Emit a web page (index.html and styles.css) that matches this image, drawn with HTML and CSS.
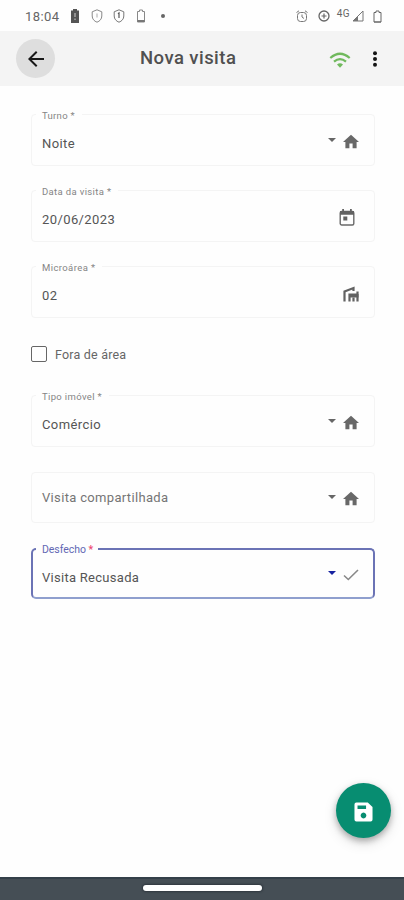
FILE: index.html
```html
<!DOCTYPE html>
<html lang="pt-BR">
<head>
<meta charset="utf-8">
<title>Nova visita</title>
<link rel="stylesheet" href="styles.css">
</head>
<body>
<svg width="0" height="0" class="defs">
  <symbol id="home" viewBox="2 3 20 17"><path d="M10 20v-6h4v6h5v-8h3L12 3 2 12h3v8z"/></symbol>
  <symbol id="caret" viewBox="0 0 8 4"><path d="M0 0h8L4 4z"/></symbol>
</svg>
<div class="screen">
  <div class="status">
    <span class="clock">18:04</span>
    <svg class="st-battery" viewBox="0 0 10 14"><path d="M3 0h4v1.500h2V14H1V1.500h2z" fill="#555"/><path d="M5 4v4M5 9.500v1.500" stroke="#bbb" stroke-width="1.200"/></svg>
    <svg class="st-shield" viewBox="0 0 12 14"><path d="M6 .8l4.800 2v4.200c0 3-2 5.200-4.800 6.200C3.200 12.200 1.200 10 1.200 7V2.800z" fill="none" stroke="#888"/><path d="M6 4.500v4" stroke="#aaa"/></svg>
    <svg class="st-shield second" viewBox="0 0 12 14"><path d="M6 .8l4.800 2v4.200c0 3-2 5.200-4.800 6.200C3.200 12.200 1.200 10 1.200 7V2.800z" fill="none" stroke="#777"/><path d="M5 4.800l1-.8v5" fill="none" stroke="#555" stroke-width="1.200"/></svg>
    <svg class="st-battery" viewBox="0 0 10 14"><path d="M3.500 1h3v1.500h2v10.500h-7V2.500h2z" fill="none" stroke="#888"/><path d="M1.500 12h7" stroke="#777" stroke-width="2"/></svg>
    <i class="dot"></i>
    <div class="st-right">
      <svg width="12" height="13" viewBox="0 0 12 13"><g fill="none" stroke="#777"><rect x="1.500" y="2.500" width="9" height="9" rx="3"/><path d="M.5 2.500L3 .8M11.500 2.500L9 .8M6 4.500V7l2 1.500"/></g></svg>
      <svg width="12" height="12" viewBox="0 0 12 12"><circle cx="6" cy="6" r="5" fill="none" stroke="#666" stroke-width="1.300"/><path d="M3.500 6h5M6 3.500v5" stroke="#666" stroke-width="1.200"/></svg>
      <span class="net">4G</span>
      <svg class="signal" width="12" height="12" viewBox="0 0 12 12"><path d="M11 1v10H1z" fill="none" stroke="#777"/><path d="M6 6v5H1z" fill="#777"/></svg>
      <svg class="batt" width="9" height="13" viewBox="0 0 9 13"><path d="M3 1h3v1.500h2V12H1V2.500h2z" fill="none" stroke="#666"/><path d="M1 12h7" stroke="#666"/></svg>
    </div>
  </div>
  <header class="bar">
    <button class="back" aria-label="Voltar"><svg width="16" height="16" viewBox="4 4 16 16"><path d="M20 11H7.830l5.590-5.590L12 4l-8 8 8 8 1.410-1.410L7.830 13H20z" fill="#181818"/></svg></button>
    <h1>Nova visita</h1>
    <svg class="wifi" width="22" height="16" viewBox="0 0 22 16"><g fill="none" stroke="#70b95d" stroke-width="2.200"><path d="M1.300 6Q11-2.500 20.700 6"/><path d="M5 9.700q6-5 12 0"/></g><path d="M8 12.500q3-2.300 6 0l-3 3.200z" fill="#70b95d"/></svg>
    <svg class="more" width="6" height="16" viewBox="0 0 6 16"><circle cx="3" cy="2.300" r="2"/><circle cx="3" cy="8" r="2"/><circle cx="3" cy="13.700" r="2"/></svg>
  </header>
  <main class="form">
    <div class="field"><label class="turno">Turno *</label><span class="value">Noite</span><svg class="caret"><use href="#caret"/></svg><svg class="home"><use href="#home"/></svg></div>
    <div class="field date"><label class="data">Data da visita *</label><span class="value">20/06/2023</span><svg class="cal" width="16" height="17" viewBox="0 0 16 17"><rect x="1.200" y="2.500" width="13.600" height="13.500" rx="1.500" fill="none" stroke="#6a6a6a" stroke-width="1.400"/><path d="M1 2h14v3.700H1zM3.200 0h1.800v3H3.200zM11 0h1.800v3H11zM4.300 7.500h4v4h-4z" fill="#626262"/></svg></div>
    <div class="field micro"><label class="area">Microárea *</label><span class="value">02</span><svg class="works" width="16" height="16" viewBox="0 0 16 16"><g fill="none" stroke="#626262" stroke-width="2.200"><path d="M1.500 15.500V5.500l9-3.500v3"/><path d="M6.500 15.500V8.500h8v7M10.500 15.500v-4M14.500 8.500V5.500"/></g><path d="M6 8h9.500v3.500H6z" fill="#626262"/></svg></div>
    <div class="check"><i class="box"></i><span>Fora de área</span></div>
    <div class="field tipo"><label class="imovel">Tipo imóvel *</label><span class="value">Comércio</span><svg class="caret"><use href="#caret"/></svg><svg class="home"><use href="#home"/></svg></div>
    <div class="field shared"><span class="value">Visita compartilhada</span><svg class="caret"><use href="#caret"/></svg><svg class="home"><use href="#home"/></svg></div>
    <div class="field active"><label class="desfecho">Desfecho <b>*</b></label><span class="value">Visita Recusada</span><svg class="caret"><use href="#caret"/></svg><svg class="tick" width="16" height="12" viewBox="0 0 16 12"><path d="M1 6.500l4.300 4L15 1" fill="none" stroke="#888" stroke-width="1.600"/></svg></div>
  </main>
  <button class="fab" aria-label="Salvar"><svg width="19" height="20" viewBox="0 0 20 20" preserveAspectRatio="none"><path fill="#fff" fill-rule="evenodd" d="M2.500.5h12l5 4.500v12.500a2 2 0 0 1-2 2h-15a2 2 0 0 1-2-2v-15a2 2 0 0 1 2-2zM3.700 3.500V7h9V3.500zM10 10.500a3 3 0 1 0 .01 0z"/></svg></button>
  <footer class="nav"><i></i></footer>
</div>
</body>
</html>
```
FILE: styles.css
```css
* { box-sizing: border-box; }
body { margin: 0; background: #fefefe; font-family: Roboto, "Liberation Sans", sans-serif; color: #555; }
button { border: 0; padding: 0; }
svg { display: block; flex: none; }
.defs { position: absolute; }
.screen { position: relative; height: 900px; display: flex; flex-direction: column; overflow: hidden; }

.status { height: 31px; padding: 1px 22px 0 25px; display: flex; align-items: center; }
.clock { width: 45px; font-size: 13px; letter-spacing: .45px; color: #666; }
.st-battery { width: 10px; height: 14px; }
.st-shield { width: 12px; height: 14px; margin-left: 11px; }
.st-shield.second { margin-left: 10px; margin-right: 11px; }
.dot { width: 4px; height: 4px; border-radius: 50%; background: #666; margin-left: 15px; }
.st-right { margin-left: auto; display: flex; align-items: center; }
.st-right svg + svg { margin-left: 10px; }
.net { font-size: 10px; line-height: 10px; margin: -5px 2px 0 7px; letter-spacing: .4px; color: #666; }
.st-right .signal { margin-left: 0; }
.st-right .batt { margin-left: 9px; }

.bar { height: 55px; background: #f4f4f4; display: flex; align-items: center; padding: 0 26px 0 16px; }
.back { width: 39px; height: 39px; border-radius: 50%; background: #dedede; display: grid; place-items: center; }
.bar h1 { margin: -1px auto 0 85px; font-size: 18.500px; line-height: 24px; font-weight: 500; letter-spacing: .45px; color: #505050; }
.wifi { margin-top: 2px; }
.more { margin-left: 21px; margin-top: 1px; fill: #151515; }

.form { flex: 1; padding: 28px 29px 0 31px; display: flex; flex-direction: column; }
.field { position: relative; height: 52px; border: 1px solid #f4f4f4; border-radius: 4px; padding: 0 15px 0 10px; display: flex; align-items: center; }
.field label { position: absolute; left: 4px; top: -6px; padding: 0 7px 0 6px; background: #fefefe; font-size: 9.500px; line-height: 14px; white-space: nowrap; color: #858585; }
.turno { letter-spacing: .3px; }
.data { letter-spacing: .35px; }
.area { letter-spacing: .4px; }
.imovel { letter-spacing: .35px; }
.value { margin-right: auto; padding-top: 8px; font-size: 13px; line-height: 18px; letter-spacing: .4px; }
.caret { width: 8px; height: 4px; margin-right: 6px; margin-top: -1px; fill: #666; }
.field .caret { position: relative; left: -1px; }
.home { width: 16px; height: 15px; margin-top: 2px; fill: #686868; }
.date { margin-top: 24px; }
.cal { margin-right: 4px; margin-top: 3px; }
.micro { margin-top: 24px; }
.works { margin-top: 4px; }
.check { height: 20px; margin-top: 26px; display: flex; align-items: center; font-size: 12.500px; letter-spacing: .2px; color: #666; }
.box { width: 16px; height: 16px; border: 1.500px solid #666; border-radius: 2px; margin-right: 8px; }
.tipo { margin-top: 31px; }
.shared { margin-top: 25px; height: 51px; }
.shared .value { padding-top: 0; letter-spacing: .33px; color: #757575; }
.active { margin-top: 25px; height: 51px; border: 2px solid #6b73b5; border-bottom-color: #8f9fce; border-radius: 5px; padding: 0 14px 0 9px; }
.active label { left: 3px; top: -7px; padding-right: 5px; font-size: 10.500px; letter-spacing: -.05px; color: #6267b4; }
.active b { font-weight: 500; color: #ed4771; }
.active .caret { fill: #1722a0; }
.active .value { letter-spacing: .28px; }
.tick { margin-top: 3px; }

.fab { position: absolute; left: 336px; top: 783px; width: 55px; height: 55px; border-radius: 50%; background: #078d71; display: grid; place-items: center; box-shadow: 0 3px 6px rgba(0,0,0,.28), 0 5px 14px rgba(0,0,0,.12); }
.fab svg { margin: 2px 1px 0 0; }
.nav { height: 23px; background: #454e55; border-top: 2px solid #344049; padding: 6px 0 0 143px; }
.nav i { display: block; width: 119px; height: 6px; border-radius: 3px; background: #fff; box-shadow: 0 0 2px 1px #30383f; }
```
